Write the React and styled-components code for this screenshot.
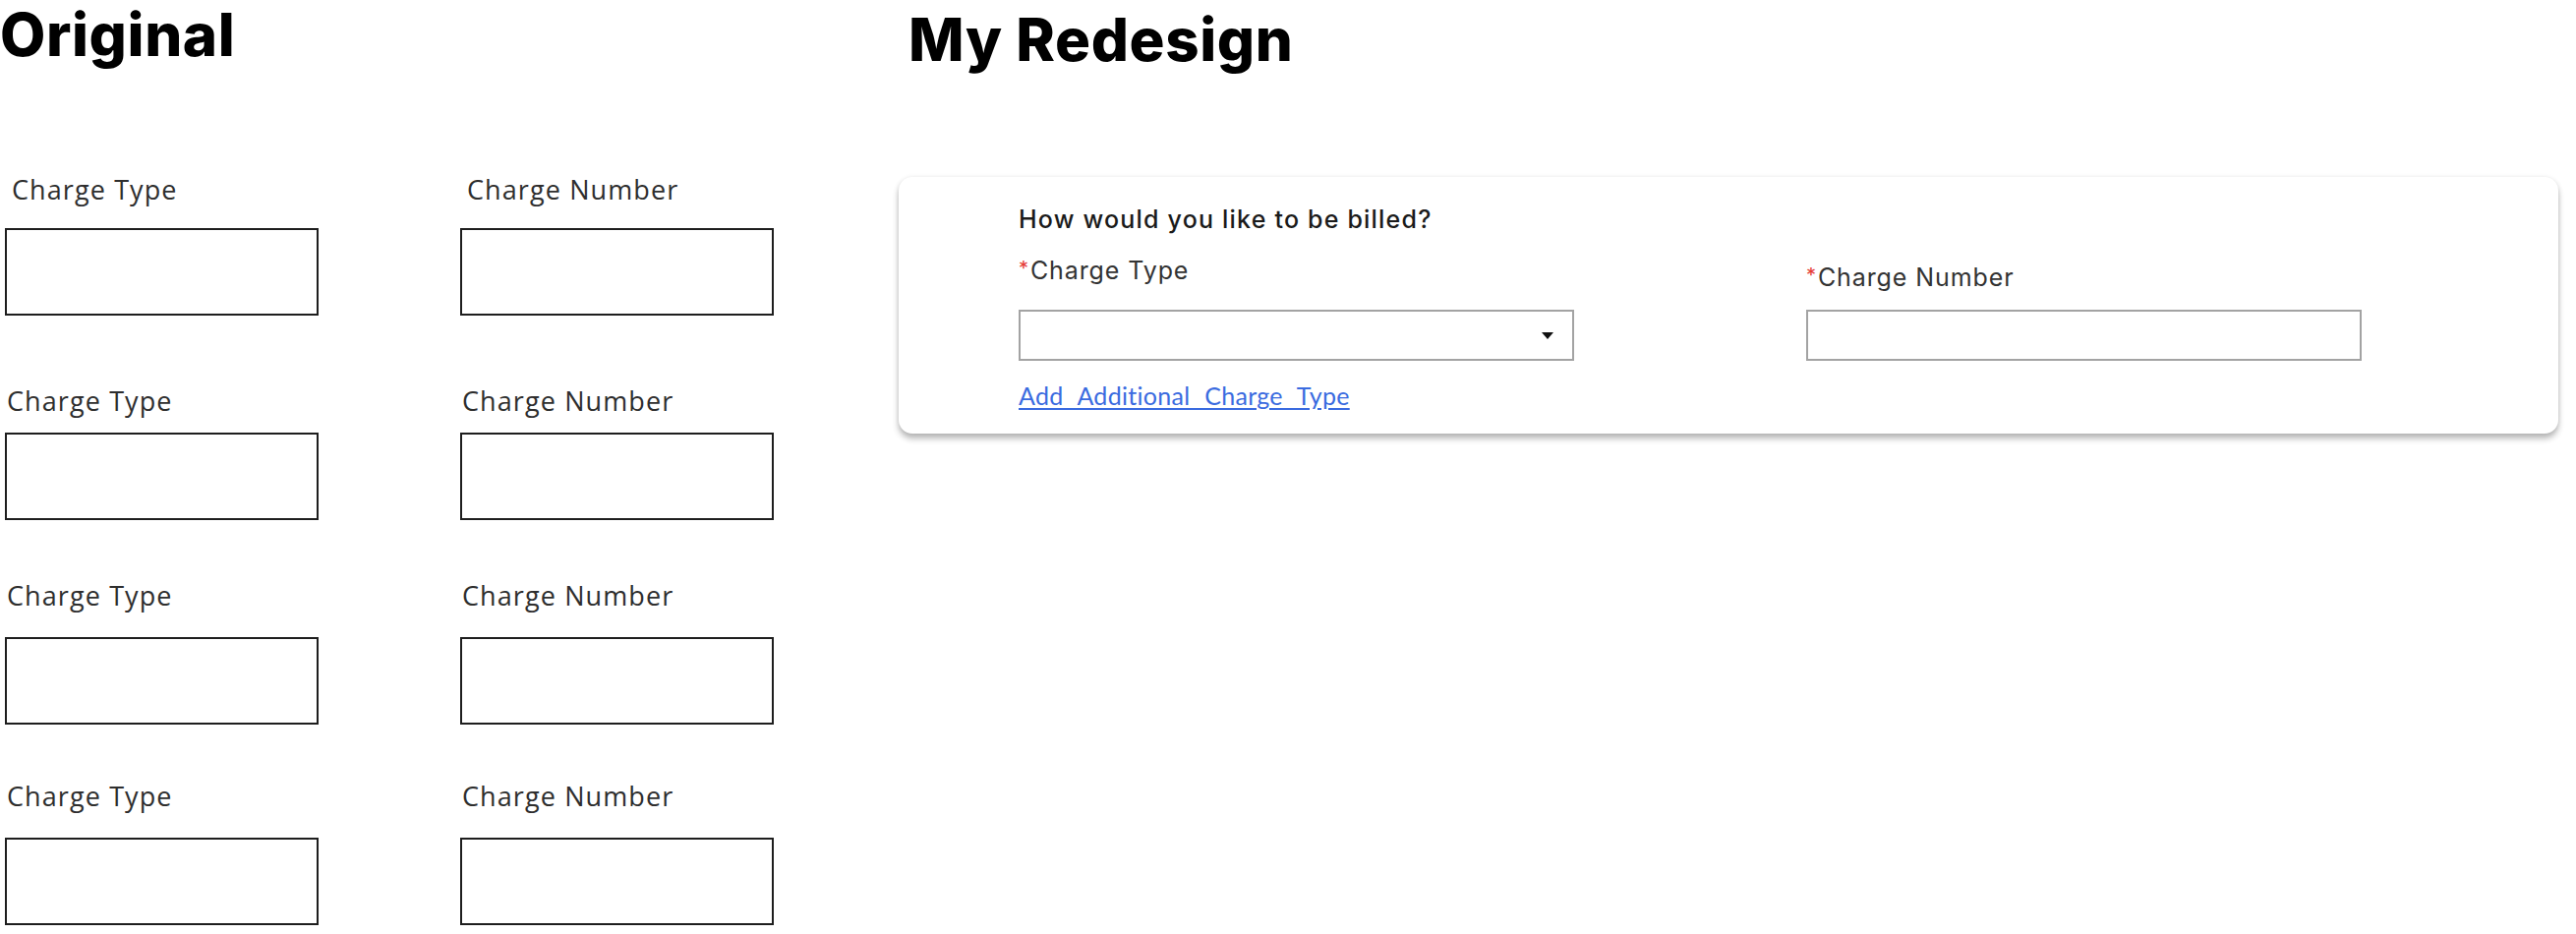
import React from "react";
import styled, { createGlobalStyle } from "styled-components";

const Global = createGlobalStyle`
  html, body { margin: 0; padding: 0; background: #ffffff; }
  body { font-family: Inter, "Liberation Sans", sans-serif; }
`;

const Page = styled.div`
  display: flex;
  align-items: flex-start;
  width: 2620px;
  height: 950px;
  overflow: hidden;
`;

const OriginalSection = styled.section`
  flex: none;
  width: 914px;
`;

const RedesignSection = styled.section`
  flex: none;
  width: 1688px;
`;

const SectionTitle = styled.h1`
  margin: ${(p) => p.$top || 0}px 0 0 0;
  padding-left: ${(p) => p.$indent || 0}px;
  font-family: Inter, "Liberation Sans", sans-serif;
  font-weight: 800;
  font-size: 60px;
  line-height: 70px;
  color: #000;
  letter-spacing: 0.6px;
`;

const OldRows = styled.div`
  display: flex;
  flex-direction: column;
`;

const OldRow = styled.div`
  margin-top: ${(p) => p.$top}px;
  display: grid;
  grid-template-columns: 319px 319px;
  column-gap: 144px;
  padding-left: 5px;
`;

const OldField = styled.div`
  display: flex;
  flex-direction: column;
`;

const OldLabel = styled.div`
  font-family: "Open Sans", Lato, sans-serif;
  font-size: 27px;
  line-height: 34px;
  color: #2e2e2e;
  padding-left: ${(p) => (p.$first ? 7 : 2)}px;
  margin-bottom: ${(p) => p.$gap}px;
  letter-spacing: 1.1px;
`;

const OldBox = styled.div`
  height: 89px;
  box-sizing: border-box;
  border: 2px solid #1e1e1e;
  background: #fff;
`;

const Card = styled.div`
  margin-top: 105px;
  background: #fff;
  border-radius: 14px;
  box-shadow: 0 5px 6px rgba(0, 0, 0, 0.28), 0 0 5px rgba(0, 0, 0, 0.07);
  padding: 28px 0 24px 122px;
`;

const Question = styled.div`
  font-family: Inter, "Liberation Sans", sans-serif;
  font-weight: 500;
  font-size: 25px;
  line-height: 30px;
  color: #1b1b1b;
  letter-spacing: 1.2px;
`;

const FieldGrid = styled.div`
  margin-top: 20px;
  display: grid;
  grid-template-columns: 565px 565px;
  column-gap: 236px;
`;

const Field = styled.div`
  display: flex;
  flex-direction: column;
`;

const FieldLabel = styled.label`
  font-family: Inter, "Liberation Sans", sans-serif;
  font-size: 25px;
  line-height: 30px;
  color: #333;
  padding-top: ${(p) => p.$shift || 0}px;
  margin-bottom: ${(p) => 25 - (p.$shift || 0)}px;
  letter-spacing: 0.9px;
`;

const Required = styled.span`
  color: #e53935;
  font-size: 20px;
  vertical-align: 4px;
  margin-right: 1px;
`;

const SelectBox = styled.div`
  height: 52px;
  box-sizing: border-box;
  border: 2px solid #a3a3a3;
  background: #fff;
  display: flex;
  align-items: center;
  justify-content: flex-end;
  padding-right: 19px;
`;

const Caret = styled.span`
  width: 0;
  height: 0;
  border-left: 6px solid transparent;
  border-right: 6px solid transparent;
  border-top: 7px solid #111;
`;

const TextBox = styled.div`
  height: 52px;
  box-sizing: border-box;
  border: 2px solid #a3a3a3;
  background: #fff;
`;

const AddLink = styled.a`
  display: inline-block;
  margin-top: 20px;
  font-family: Lato, "Open Sans", sans-serif;
  font-size: 25px;
  line-height: 30px;
  color: #3a6be0;
  text-decoration: underline;
  text-underline-offset: 3px;
  word-spacing: 8px;
  letter-spacing: 0.3px;
  cursor: pointer;
`;

const rows = [
  { top: 106, gap: 22 },
  { top: 70, gap: 15 },
  { top: 60, gap: 25 },
  { top: 56, gap: 25 },
];

export default function App() {
  return (
    <>
      <Global />
      <Page>
        <OriginalSection>
          <SectionTitle>Original</SectionTitle>
          <OldRows>
            {rows.map((r, i) => (
              <OldRow key={i} $top={r.top}>
                <OldField>
                  <OldLabel $first={i === 0} $gap={r.gap}>Charge Type</OldLabel>
                  <OldBox />
                </OldField>
                <OldField>
                  <OldLabel $first={i === 0} $gap={r.gap}>Charge Number</OldLabel>
                  <OldBox />
                </OldField>
              </OldRow>
            ))}
          </OldRows>
        </OriginalSection>
        <RedesignSection>
          <SectionTitle $indent={10} $top={5}>My Redesign</SectionTitle>
          <Card>
            <Question>How would you like to be billed?</Question>
            <FieldGrid>
              <Field>
                <FieldLabel>
                  <Required>*</Required>Charge Type
                </FieldLabel>
                <SelectBox>
                  <Caret />
                </SelectBox>
                <div>
                  <AddLink>Add Additional Charge Type</AddLink>
                </div>
              </Field>
              <Field>
                <FieldLabel $shift={7}>
                  <Required>*</Required>Charge Number
                </FieldLabel>
                <TextBox />
              </Field>
            </FieldGrid>
          </Card>
        </RedesignSection>
      </Page>
    </>
  );
}
